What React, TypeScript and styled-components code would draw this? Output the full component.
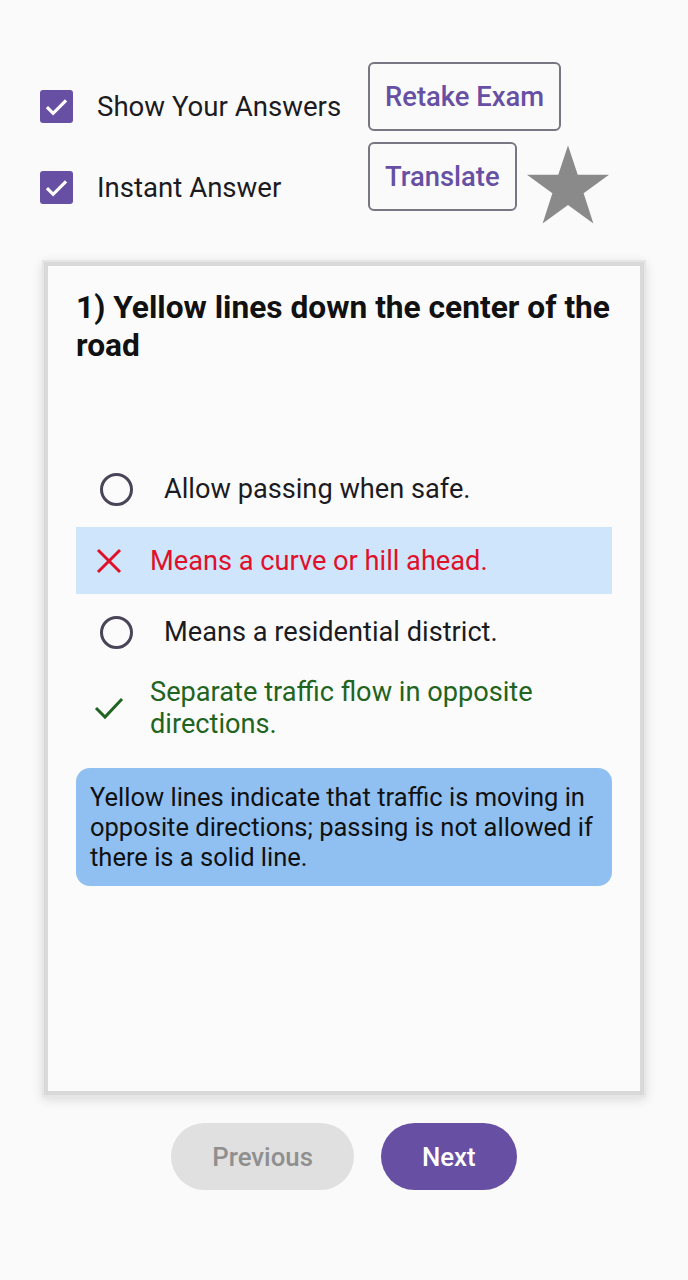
import styled, { createGlobalStyle } from "styled-components";

const GlobalStyle = createGlobalStyle`
  body {
    margin: 0;
    background: #fafafa;
    font-family: Roboto, "Noto Sans", sans-serif;
  }
`;

const Page = styled.div`
  width: 688px;
  height: 1280px;
  box-sizing: border-box;
  padding: 62px 40px 0 40px;
  display: flex;
  flex-direction: column;
`;

const TopBar = styled.div`
  display: grid;
  grid-template-columns: 328px auto;
`;

const Toggles = styled.div`
  padding-top: 10px;
  display: flex;
  flex-direction: column;
  gap: 12px;
`;

const ToggleRow = styled.label`
  height: 69px;
  display: flex;
  align-items: center;
  gap: 24px;
  font-size: 27.6px;
  color: #1c1b1f;
`;

const Box = styled.span`
  width: 33px;
  height: 33px;
  border-radius: 3px;
  background: #6750a4;
  display: flex;
  align-items: center;
  justify-content: center;
`;

const Actions = styled.div`
  display: flex;
  flex-direction: column;
  align-items: flex-start;
  gap: 11px;
`;

const ActionRow = styled.div`
  display: flex;
  align-items: flex-start;
  gap: 10px;
`;

const OutlineButton = styled.button`
  height: 69px;
  padding: 0 15px;
  border: 2px solid #7a7582;
  border-radius: 6px;
  background: transparent;
  color: #6750a4;
  font-family: Roboto, sans-serif;
  font-weight: 500;
  font-size: 27.4px;
`;

const StarIcon = styled.svg`
  margin-top: 3px;
`;

const Card = styled.div`
  margin-top: 42px;
  margin-left: 8px;
  width: 592px;
  height: 825px;
  box-sizing: border-box;
  background: #fbfbfb;
  box-shadow: 0 0 0 4px #d9d9d9, 0 0 0 6px #e6e6e6, 0 3px 10px 6px rgba(0, 0, 0, 0.12);
  padding: 23px 28px 0 28px;
  display: flex;
  flex-direction: column;
`;

const Question = styled.h2`
  margin: 0;
  font-size: 31.7px;
  font-weight: 700;
  line-height: 38px;
  color: #111;
`;

const Options = styled.div`
  margin-top: 86px;
  display: flex;
  flex-direction: column;
`;

type Tone = "plain" | "wrong" | "right";

const Option = styled.div<{ $tone: Tone }>`
  display: flex;
  align-items: center;
  min-height: ${(p) => (p.$tone === "wrong" ? "67px" : "76px")};
  box-sizing: border-box;
  padding: ${(p) => (p.$tone === "right" ? "6px" : "0")} 0 ${(p) => (p.$tone === "right" ? "6px" : "0")}
    ${(p) => (p.$tone === "plain" ? "24px" : "17px")};
  background: ${(p) => (p.$tone === "wrong" ? "#cfe5fb" : "transparent")};
  color: ${(p) =>
    p.$tone === "wrong" ? "#e0102a" : p.$tone === "right" ? "#1f6420" : "#1c1b1f"};
  font-size: 27.2px;
  line-height: 32px;
  gap: ${(p) => (p.$tone === "plain" ? "31px" : "25px")};
`;

const Radio = styled.span`
  width: 27px;
  height: 27px;
  flex: none;
  border: 3px solid #4a4458;
  border-radius: 50%;
`;

const Mark = styled.span`
  width: 32px;
  flex: none;
  display: flex;
  justify-content: center;
`;

const Explain = styled.div`
  margin-top: 22px;
  background: #90c0f2;
  border-radius: 14px;
  padding: 14px;
  font-size: 25.5px;
  line-height: 30px;
  color: #111;
`;

const Nav = styled.div`
  margin-top: 32px;
  display: flex;
  justify-content: center;
  gap: 27px;
`;

const Pill = styled.button<{ $primary?: boolean }>`
  height: 67px;
  padding: 0 41px;
  border: none;
  border-radius: 34px;
  background: ${(p) => (p.$primary ? "#6750a4" : "#e0e0e0")};
  color: ${(p) => (p.$primary ? "#fff" : "#8f8f8f")};
  font-family: Roboto, sans-serif;
  font-weight: 500;
  font-size: 25.8px;
`;

const Check = () => (
  <svg width="27" height="27" viewBox="0 0 24 24" fill="none">
    <path d="M3.5 12.5l5.5 5.5L20.5 6.5" stroke="#fff" strokeWidth="2.8" />
  </svg>
);

const Star = () => (
  <StarIcon width="82" height="79" viewBox="0 0 84 80">
    <polygon
      points="42,0 52,30 84,30 58,49 68,80 42,61 16,80 26,49 0,30 32,30"
      fill="#8a8a8a"
    />
  </StarIcon>
);

export default function App() {
  return (
    <>
      <GlobalStyle />
      <Page>
        <TopBar>
          <Toggles>
            <ToggleRow>
              <Box><Check /></Box>
              Show Your Answers
            </ToggleRow>
            <ToggleRow>
              <Box><Check /></Box>
              Instant Answer
            </ToggleRow>
          </Toggles>
          <Actions>
            <OutlineButton>Retake Exam</OutlineButton>
            <ActionRow>
              <OutlineButton>Translate</OutlineButton>
              <Star />
            </ActionRow>
          </Actions>
        </TopBar>
        <Card>
          <Question>1) Yellow lines down the center of the road</Question>
          <Options>
            <Option $tone="plain">
              <Radio />
              Allow passing when safe.
            </Option>
            <Option $tone="wrong">
              <Mark>
                <svg width="26" height="26" viewBox="0 0 26 26">
                  <path d="M2 2L24 24M24 2L2 24" stroke="#e0102a" strokeWidth="3" />
                </svg>
              </Mark>
              Means a curve or hill ahead.
            </Option>
            <Option $tone="plain">
              <Radio />
              Means a residential district.
            </Option>
            <Option $tone="right">
              <Mark>
                <svg width="30" height="24" viewBox="0 0 30 24">
                  <path d="M2 12l9 9L28 3" stroke="#1f6420" strokeWidth="3" fill="none" />
                </svg>
              </Mark>
              Separate traffic flow in opposite directions.
            </Option>
          </Options>
          <Explain>
            Yellow lines indicate that traffic is moving in opposite directions; passing is not allowed if there is a solid line.
          </Explain>
        </Card>
        <Nav>
          <Pill>Previous</Pill>
          <Pill $primary>Next</Pill>
        </Nav>
      </Page>
    </>
  );
}
